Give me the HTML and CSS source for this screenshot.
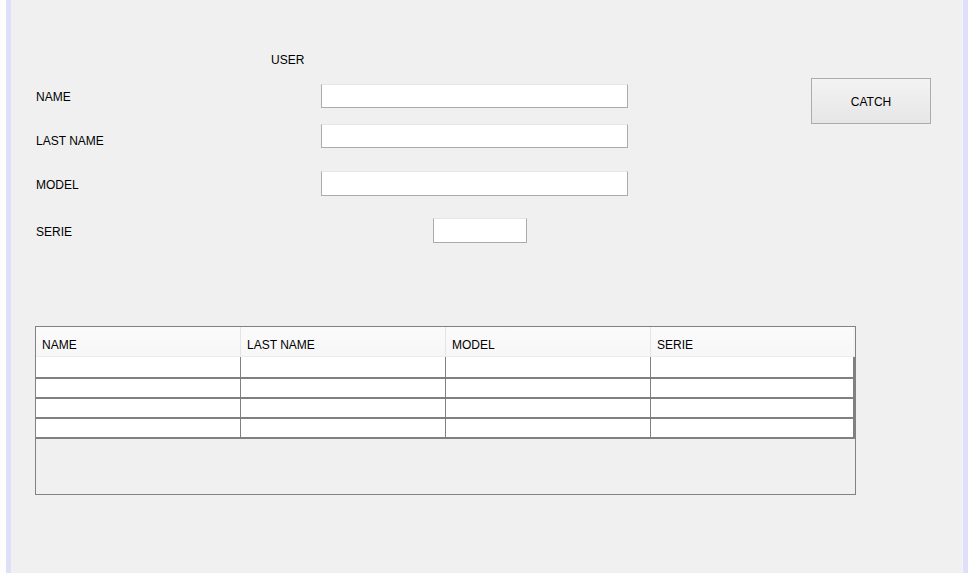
FILE: index.html
```html
<!DOCTYPE html>
<html>
<head>
<meta charset="utf-8">
<title>User</title>
<link rel="stylesheet" href="styles.css">
</head>
<body>
<div class="frame">
  <div class="edge-white"></div>
  <div class="edge-lav"></div>
  <main class="panel">
    <div class="user">USER</div>
    <div class="top">
      <div class="form">
        <div class="row r1"><span class="label">NAME</span><input class="field" type="text"></div>
        <div class="row r2"><span class="label">LAST NAME</span><input class="field" type="text"></div>
        <div class="row r3"><span class="label">MODEL</span><input class="field tall" type="text"></div>
        <div class="row r4"><span class="label">SERIE</span><input class="field small tall" type="text"></div>
      </div>
      <button class="catch" type="button">CATCH</button>
    </div>
    <div class="table">
      <div class="thead">
        <div class="th">NAME</div>
        <div class="th">LAST NAME</div>
        <div class="th">MODEL</div>
        <div class="th last">SERIE</div>
      </div>
      <div class="tr first"><div class="td"></div><div class="td"></div><div class="td"></div><div class="td last"></div></div>
      <div class="tr"><div class="td"></div><div class="td"></div><div class="td"></div><div class="td last"></div></div>
      <div class="tr"><div class="td"></div><div class="td"></div><div class="td"></div><div class="td last"></div></div>
      <div class="tr"><div class="td"></div><div class="td"></div><div class="td"></div><div class="td last"></div></div>
    </div>
  </main>
  <div class="edge-lav right"></div>
</div>
</body>
</html>
```

FILE: styles.css
```css
* { box-sizing: border-box; }
html, body { margin: 0; padding: 0; }
body {
  font-family: "Liberation Sans", Arial, sans-serif;
  font-size: 12px;
  color: #000;
  background: #f0f0f0;
}
.frame {
  display: flex;
  width: 968px;
  height: 573px;
  overflow: hidden;
}
.edge-white { width: 6px; background: #fdfdfd; flex: none; }
.edge-lav { width: 5px; background: #dfdff9; flex: none; }
.edge-lav.right { width: 6px; border-left: 1px solid #f4f4fb; }
.panel {
  flex: 1;
  background: #f0f0f0;
  padding: 53px 0 0 25px;
}
.user {
  margin-left: 235px;
  height: 14px;
  line-height: 14px;
}
.top {
  display: flex;
  align-items: flex-start;
}
.form { width: 592px; }
.row {
  display: flex;
  align-items: flex-start;
}
.label {
  width: 285px;
  flex: none;
  line-height: 14px;
  height: 14px;
}
.r1 { margin-top: 17px; }
.r1 .label { margin-top: 6px; }
.r2 { margin-top: 16px; }
.r2 .label { margin-top: 10px; }
.r3 { margin-top: 23px; }
.r3 .label { margin-top: 7px; }
.r4 { margin-top: 22px; }
.r4 .label { margin-top: 7px; }
.field {
  width: 307px;
  height: 24px;
  margin: 0;
  padding: 0 3px;
  background: #fff;
  border: 1px solid #ababab;
  border-top-color: #e6e6e6;
  outline: none;
  font: inherit;
}
.field.tall { height: 25px; }
.field.small { width: 94px; margin-left: 112px; }
.catch {
  margin: 11px 0 0 183px;
  width: 120px;
  height: 46px;
  padding: 2px 0 0;
  border: 1px solid #acacac;
  background: linear-gradient(#f3f3f3, #e6e6e6);
  font: inherit;
  color: #000;
}
.table {
  margin: 83px 0 0 -1px;
  width: 821px;
  height: 169px;
  border: 1px solid #828282;
  background: #f0f0f0;
}
.thead {
  display: flex;
  height: 30px;
  background: linear-gradient(#fbfbfb, #f7f7f7);
  border-bottom: 1px solid #ececec;
}
.th {
  width: 205px;
  padding: 3px 0 0 6px;
  line-height: 31px;
  border-right: 1px solid #e4e4e4;
}
.th.last { width: 204px; border-right: 2px solid #f4f4f4; }
.tr {
  display: flex;
  height: 20px;
  background: #fff;
  border-bottom: 2px solid #808080;
}
.tr.first { height: 22px; }
.td {
  width: 205px;
  border-right: 1px solid #808080;
}
.td.last { width: 204px; border-right: 2px solid #808080; }
```
